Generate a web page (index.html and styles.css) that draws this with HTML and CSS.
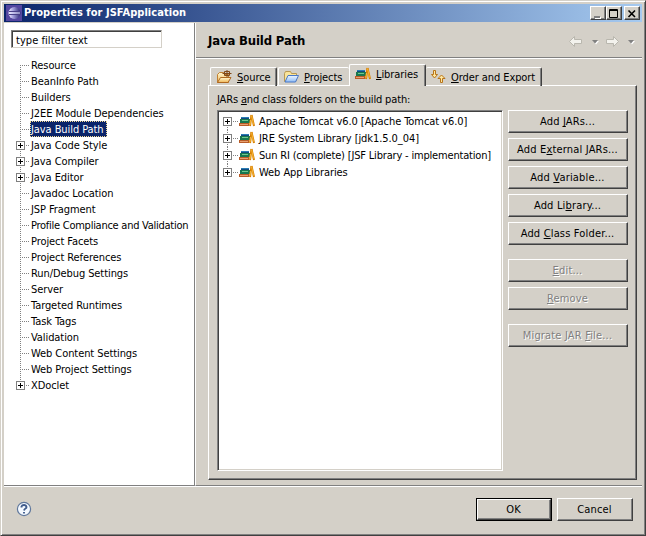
FILE: index.html
```html
<!DOCTYPE html>
<html lang="en">
<head>
<meta charset="utf-8">
<title>Properties for JSFApplication</title>
<link rel="stylesheet" href="styles.css">
</head>
<body>
<svg class="defs" width="0" height="0">
  <defs>
    <linearGradient id="folder" x2="0" y2="1"><stop stop-color="#fff6cf"/><stop offset="1" stop-color="#f0b858"/></linearGradient>
    <linearGradient id="blue" x2="0" y2="1"><stop stop-color="#eef6ff"/><stop offset="1" stop-color="#8fbcf5"/></linearGradient>
    <linearGradient id="orb" x2="1" y2="0"><stop stop-color="#f0ecff"/><stop offset=".35" stop-color="#a8a4e0"/><stop offset="1" stop-color="#2c2878"/></linearGradient>
    <symbol id="books" viewBox="0 0 16 16">
      <path d="M2 4h8v2h-8z" fill="#2a7cb4"/>
      <path d="M2 5.500h8" stroke="#124a80"/>
      <path d="M1 6h10v4h-10z" fill="#187850"/>
      <path d="M3 7.500h6" stroke="#70c890"/>
      <path d="M0 10h10v3h-10z" fill="#b85c28"/>
      <path d="M1 11.500h8" stroke="#e8a070"/>
      <path d="M12.500 2l-1.500 11" stroke="#d88000" stroke-width="2"/>
      <path d="M12.500 2l2.500 11" stroke="#d88000" stroke-width="2"/>
      <path d="M11.500 7l-.5 5M12.500 2.500l2 9" stroke="#f8b838"/>
    </symbol>
  </defs>
</svg>
<div class="window">
  <header class="titlebar">
    <svg class="logo" width="16" height="16" viewBox="0 0 16 16"><rect width="16" height="16" fill="#5446a0"/><circle cx="8.500" cy="8" r="6" fill="url(#orb)"/><path d="M3 6.500h11M3 9.500h11" stroke="#484088"/><path d="M3 8h11" stroke="#e8e8ff"/></svg>
    <h1><span class="t-title">Properties for JSFApplication</span></h1>
    <div class="caption">
      <b><svg width="12" height="10"><path d="M2 8h6" stroke="#fff" stroke-width="2" transform="translate(1 1)"/><path d="M2 8h6" stroke="#808080" stroke-width="2"/></svg></b>
      <b><svg width="12" height="10"><path d="M1.500 .5h8v8h-8zM1 1.500h9" fill="none" stroke="#000"/></svg></b>
      <b class="close"><svg width="12" height="10"><path d="M2.500 1.500l6.500 6.500M9 1.500l-6.500 6.500" stroke="#000" stroke-width="1.600"/></svg></b>
    </div>
  </header>
  <div class="main">
    <aside class="sidebar">
      <div class="filter"><span>type filter text</span></div>
      <ul class="tree">
        <li><i></i><span>Resource</span></li>
        <li><i></i><span>BeanInfo Path</span></li>
        <li><i></i><span>Builders</span></li>
        <li><i></i><span>J2EE Module Dependencies</span></li>
        <li class="selected"><i></i><span>Java Build Path</span></li>
        <li class="parent"><i></i><span>Java Code Style</span></li>
        <li class="parent"><i></i><span>Java Compiler</span></li>
        <li class="parent"><i></i><span>Java Editor</span></li>
        <li><i></i><span>Javadoc Location</span></li>
        <li><i></i><span>JSP Fragment</span></li>
        <li class="tight"><i></i><span>Profile Compliance and Validation</span></li>
        <li><i></i><span>Project Facets</span></li>
        <li><i></i><span>Project References</span></li>
        <li><i></i><span>Run/Debug Settings</span></li>
        <li><i></i><span>Server</span></li>
        <li><i></i><span>Targeted Runtimes</span></li>
        <li><i></i><span>Task Tags</span></li>
        <li><i></i><span>Validation</span></li>
        <li><i></i><span>Web Content Settings</span></li>
        <li><i></i><span>Web Project Settings</span></li>
        <li class="parent"><i></i><span>XDoclet</span></li>
      </ul>
    </aside>
    <section class="page">
      <div class="heading">
        <h2>Java Build Path</h2>
        <svg width="68" height="14" viewBox="0 0 68 14"><g fill="#f3f2ed" stroke="#b9b7ae"><path d="M2.500 7.500l5-5v3h7v4h-7v3z"/><path d="M51.500 7.500l-5-5v3h-7v4h7v3z"/></g><path d="M26 7h6l-3 3.500zM62 7h6l-3 3.500z" fill="#fff"/><path d="M25 6h6l-3 3.500zM61 6h6l-3 3.500z" fill="#808080"/></svg>
      </div>
      <div class="tabs">
        <div class="tab source"><svg width="16" height="16" viewBox="0 0 16 16"><path d="M1.500 13.500v-8l2-2h4l1 2h4v8z" fill="url(#folder)" stroke="#c08030"/><path d="M1.500 13.500l3-5h10.500l-3 5z" fill="url(#folder)" stroke="#b06820"/><path d="M8.500 2.500h5v4h-5zM11 1v7M6.500 4.500h9" fill="none" stroke="#804818"/></svg><span><u>S</u>ource</span></div>
        <div class="tab projects"><svg width="16" height="16" viewBox="0 0 16 16"><path d="M1.500 12.500v-8l1-2h5l1 2h5v7z" fill="#f9e49b" stroke="#b99852"/><path d="M2 13l3-6.500h10.500l-3 6.500z" fill="url(#blue)" stroke="#4878c8"/></svg><span><u>P</u>rojects</span></div>
        <div class="tab libraries"><svg width="16" height="16"><use href="#books"/></svg><span><u>L</u>ibraries</span></div>
        <div class="tab order"><svg width="16" height="16" viewBox="0 0 16 16"><g fill="#ffe8a0" stroke="#b87418"><path d="M3.500 1.500h2v4h2l-3 3.500-3-3.500h2z"/><path d="M10.500 13.500h2v-4h2.500l-3.500-3.500-3.500 3.500h2.500z"/></g></svg><span><u>O</u>rder and Export</span></div>
      </div>
      <div class="panel">
        <div class="left">
          <p>JARs <u>a</u>nd class folders on the build path:</p>
          <ul class="list">
            <li><i></i><svg width="16" height="16"><use href="#books"/></svg><span>Apache Tomcat v6.0 [Apache Tomcat v6.0]</span></li>
            <li><i></i><svg width="16" height="16"><use href="#books"/></svg><span>JRE System Library [jdk1.5.0_04]</span></li>
            <li class="tight"><i></i><svg width="16" height="16"><use href="#books"/></svg><span>Sun RI (complete) [JSF Library - implementation]</span></li>
            <li><i></i><svg width="16" height="16"><use href="#books"/></svg><span>Web App Libraries</span></li>
          </ul>
        </div>
        <div class="actions">
          <button><span>Add <u>J</u>ARs...</span></button>
          <button><span>Add E<u>x</u>ternal JARs...</span></button>
          <button><span>Add <u>V</u>ariable...</span></button>
          <button><span>Add Li<u>b</u>rary...</span></button>
          <button><span>Add <u>C</u>lass Folder...</span></button>
          <button class="gap" disabled><span><u>E</u>dit...</span></button>
          <button disabled><span><u>R</u>emove</span></button>
          <button class="gap" disabled><span>Migrate JAR <u>F</u>ile...</span></button>
        </div>
      </div>
    </section>
  </div>
  <footer class="footer">
    <svg width="16" height="16" viewBox="0 0 16 16"><circle cx="8" cy="8" r="6.600" fill="#f4f9ff" stroke="#60789c" stroke-width="1.200"/><path d="M5.500 6.500v-1q.5-1.500 2.500-1.500t2.500 2q0 1-1 1.500t-1.500 2M8 11v1.600" fill="none" stroke="#405c8c" stroke-width="1.900"/></svg>
    <div class="confirm"><div class="default"><button><span>OK</span></button></div><button><span>Cancel</span></button></div>
  </footer>
</div>
</body>
</html>
```

FILE: styles.css
```css
* { box-sizing: border-box; }
body { margin: 0; font: 11px/13px "DejaVu Sans Condensed", "DejaVu Sans", sans-serif; font-stretch: condensed; letter-spacing: -0.15px; color: #000; background: #d4d0c8; }
h1, h2, p, ul { margin: 0; padding: 0; }
li { list-style: none; white-space: nowrap; }
svg { display: block; flex: none; }
.defs { position: absolute; }
u { text-decoration: underline; text-underline-offset: 1px; text-decoration-thickness: 1px; text-decoration-skip-ink: none; }
.window { width: 646px; height: 536px; background: #d4d0c8; border: 1px solid; border-color: #d4d0c8 #404040 #404040 #d4d0c8; box-shadow: inset 1px 1px #fff, inset -1px -1px #808080; padding: 3px; display: flex; flex-direction: column; }

.titlebar { width: 638px; height: 18px; display: flex; align-items: center; padding: 0 2px; background: linear-gradient(90deg, #0a246a, #a6caf0); flex: none; }
.titlebar h1 { font-size: 11px; line-height: 18px; letter-spacing: 0.05px; color: #fff; margin-left: 2px; flex: 1; white-space: nowrap; }
.caption { display: flex; }
.caption b { width: 16px; height: 14px; padding: 2px 1px; background: #d4d0c8; border: 1px solid; border-color: #fff #404040 #404040 #fff; box-shadow: inset -1px -1px #808080; }
.caption .close { margin-left: 2px; }

.main { display: flex; width: 638px; height: 465px; padding-top: 1px; border-bottom: 1px solid #fff; flex: none; }
.sidebar { width: 192px; height: 463px; background: #fff; border-right: 1px solid #fff; border-bottom: 1px solid #808080; box-shadow: inset -1px 0 #808080; padding: 7px 0 0 7px; flex: none; }
.filter { width: 151px; height: 18px; border: 1px solid; border-color: #808080 #d4d0c8 #d4d0c8 #808080; box-shadow: inset 1px 1px #404040; padding: 2px 4px; line-height: 15px; letter-spacing: 0.05px; }
.tree { margin-top: 9px; padding-left: 5px; letter-spacing: -0.08px; }
.tree .tight { letter-spacing: -0.26px; }
.tree li { display: flex; align-items: center; height: 16px; background: repeating-linear-gradient(#808080 0 1px, transparent 1px 2px) 4px 0 / 1px 100% no-repeat; }
.tree li:first-child { background-size: 1px 8px; background-position: 4px 8px; }
.tree li:last-child { background-size: 1px 8px; }
.tree i { width: 14px; height: 9px; background: repeating-linear-gradient(90deg, #808080 0 1px, transparent 1px 2px) 4px 4px / 10px 1px no-repeat; }
.tree .parent i, .list i { background:
  linear-gradient(#000, #000) 2px 4px / 5px 1px no-repeat,
  linear-gradient(#000, #000) 4px 2px / 1px 5px no-repeat,
  linear-gradient(#fff, #fff) 1px 1px / 7px 7px no-repeat,
  linear-gradient(#808080, #808080) 0 0 / 9px 9px no-repeat,
  repeating-linear-gradient(90deg, transparent 0 1px, #808080 1px 2px) 9px 4px / 5px 1px no-repeat; }
.tree span { height: 16px; line-height: 17px; padding: 0 1px; }
.tree .selected span { background: #0a246a; color: #fff; width: 77px; outline: 1px dotted #f5db95; outline-offset: -1px; }

.page { width: 446px; height: 463px; border-bottom: 1px solid #808080; }
.heading { height: 36px; display: flex; align-items: center; justify-content: space-between; padding: 0 7px 0 12px; border-bottom: 1px solid #fff; box-shadow: inset 0 -1px #808080; }
.heading h2 { font-size: 13px; line-height: 16px; letter-spacing: -0.15px; padding-top: 1px; }
.tabs { display: flex; align-items: flex-end; height: 27px; padding-left: 14px; margin-bottom: -1px; }
.tab { display: flex; align-items: center; height: 19px; padding-left: 5px; gap: 5px; border: 1px solid; border-color: #fff #404040 transparent #fff; border-bottom: 0; border-radius: 2px 2px 0 0; box-shadow: inset -1px 0 #808080; white-space: nowrap; letter-spacing: -0.08px; }
.tab span { padding-top: 1px; }
.source { width: 67px; }
.projects { width: 71px; margin-left: 1px; border-right: 0; box-shadow: none; gap: 5px; padding-left: 4px; }
.libraries { width: 77px; height: 22px; background: #d4d0c8; position: relative; gap: 5px; padding-bottom: 3px; }
.order { width: 116px; gap: 5px; padding-left: 4px; border-left: 0; }
.panel { display: flex; width: 429px; height: 395px; margin-left: 12px; border: 1px solid; border-color: #fff #404040 #404040 #fff; box-shadow: inset -1px -1px #808080; padding: 7px 8px; gap: 5px; }
.left { width: 286px; }
.left p { height: 17px; white-space: nowrap; }
.list { width: 286px; height: 361px; background: #fff; border: 1px solid; border-color: #808080 #fff #fff #808080; box-shadow: inset 1px 1px #404040, inset -1px -1px #d4d0c8; padding: 2px 5px; letter-spacing: -0.07px; }
.list .tight { letter-spacing: -0.18px; }
.list li { display: flex; align-items: center; height: 17px; background: repeating-linear-gradient(#808080 0 1px, transparent 1px 2px) 4px 0 / 1px 100% no-repeat; }
.list li:first-child { background-position: 4px 8px; }
.list li:last-child { background-size: 1px 8px; }
.list i { width: 16px; height: 9px; background-size: 5px 1px, 1px 5px, 7px 7px, 9px 9px, 7px 1px; }
.list svg { margin-top: -1px; }
.list span { margin-left: 4px; }
.actions { padding-top: 17px; display: flex; flex-direction: column; gap: 5px; }
button { width: 120px; height: 23px; padding: 0 1px 0 0; font: inherit; letter-spacing: 0.17px; color: #000; background: #d4d0c8; border: 1px solid; border-color: #fff #404040 #404040 #fff; box-shadow: inset -1px -1px #808080; border-radius: 0; white-space: nowrap; flex: none; }
button:disabled { color: #808080; text-shadow: 1px 1px #fff; }
.actions .gap { margin-top: 9px; }

.footer { height: 46px; display: flex; justify-content: space-between; padding: 11px 9px 0 12px; }
.footer > svg { margin-top: 3px; }
.confirm { display: flex; gap: 5px; }
.confirm button { width: 76px; }
.default { width: 76px; height: 23px; border: 1px solid #000; }
.confirm .default button { width: 74px; height: 21px; }
```
